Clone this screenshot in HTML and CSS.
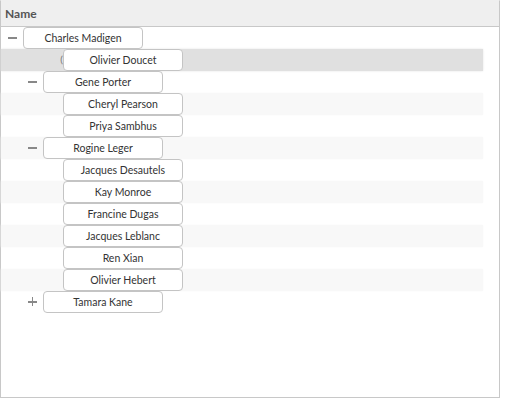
FILE: index.html
```html
<!DOCTYPE html>
<html lang="en">
<head>
  <meta charset="UTF-8">
  <title>Tree Grid</title>
  <link rel="stylesheet" href="styles.css">
</head>
<body>

  <div class="tree-grid">
    <div class="grid-header">Name</div>
    <ul class="tree-rows">
      <li class="row level-0"><span class="toggle minus"></span><span class="node">Charles Madigen</span></li>
      <li class="row level-2 selected"><span class="toggle"><span class="peek">(</span></span><span class="node">Olivier Doucet</span></li>
      <li class="row level-1"><span class="toggle minus"></span><span class="node">Gene Porter</span></li>
      <li class="row level-2 alt"><span class="toggle"></span><span class="node">Cheryl Pearson</span></li>
      <li class="row level-2"><span class="toggle"></span><span class="node">Priya Sambhus</span></li>
      <li class="row level-1 alt"><span class="toggle minus"></span><span class="node">Rogine Leger</span></li>
      <li class="row level-2"><span class="toggle"></span><span class="node">Jacques Desautels</span></li>
      <li class="row level-2 alt"><span class="toggle"></span><span class="node">Kay Monroe</span></li>
      <li class="row level-2"><span class="toggle"></span><span class="node">Francine Dugas</span></li>
      <li class="row level-2 alt"><span class="toggle"></span><span class="node">Jacques Leblanc</span></li>
      <li class="row level-2"><span class="toggle"></span><span class="node">Ren Xian</span></li>
      <li class="row level-2 alt"><span class="toggle"></span><span class="node">Olivier Hebert</span></li>
      <li class="row level-1"><span class="toggle plus"></span><span class="node">Tamara Kane</span></li>
    </ul>
  </div>

</body>
</html>
```
FILE: styles.css
```css
body {
  margin: 0;
  font-family: Lato, "Open Sans", sans-serif;
  font-size: 10.5px;
  color: #333;
  background: #fff;
}
.tree-grid {
  box-sizing: border-box;
  width: 500px;
  height: 398px;
  border: 1px solid #c8c8c8;
  border-top-color: #efefef;
}
.grid-header {
  height: 25px;
  line-height: 25px;
  padding-left: 4px;
  background: #efefef;
  border-bottom: 1px solid #c8c8c8;
  font-weight: bold;
  font-size: 12px;
  color: #555;
}
.tree-rows {
  list-style-type: none;
  margin: 0;
  padding: 0;
  width: 482px;
}
.row {
  display: flex;
  align-items: center;
  height: 22px;
}
.row.alt {
  background: #f8f8f8;
  box-shadow: 0 0 2px #f8f8f8;
}
.row.selected {
  background: #e0e0e0;
  box-shadow: 0 0 2px #e4e4e4;
}
.level-1 {
  padding-left: 20px;
}
.level-2 {
  padding-left: 40px;
}
.toggle {
  width: 22px;
  height: 22px;
  position: relative;
}
.minus::before,
.plus::before,
.plus::after {
  content: "";
  position: absolute;
  background: #888;
}
.minus::before,
.plus::before {
  left: 7px;
  top: 10px;
  width: 9px;
  height: 1.5px;
}
.plus::after {
  left: 10.75px;
  top: 6.25px;
  width: 1.5px;
  height: 9px;
}
.peek {
  position: absolute;
  right: 0;
  top: 4px;
  font-size: 10px;
  color: #777;
}
.node {
  box-sizing: border-box;
  width: 120px;
  height: 22px;
  line-height: 20px;
  text-align: center;
  background: #fff;
  border: 1px solid #c4c4c4;
  border-radius: 4px;
  position: relative;
}
```
